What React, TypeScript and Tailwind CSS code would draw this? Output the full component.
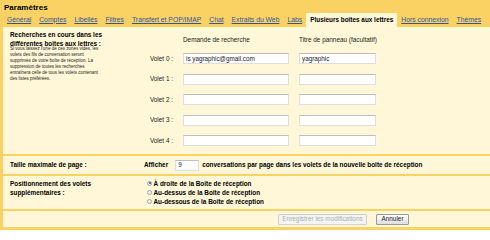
import React from 'react';

const tabs = [
  'Général',
  'Comptes',
  'Libellés',
  'Filtres',
  'Transfert et POP/IMAP',
  'Chat',
  'Extraits du Web',
  'Labs',
];

const volets = [
  { query: 'is yagraphic@gmail.com', title: 'yagraphic' },
  { query: '', title: '' },
  { query: '', title: '' },
  { query: '', title: '' },
  { query: '', title: '' },
];

const positions = [
  'À droite de la Boîte de réception',
  'Au-dessus de la Boîte de réception',
  'Au-dessous de la Boîte de réception',
];

const Field: React.FC<{ value: string; className: string }> = ({ value, className }) => (
  <div
    className={`h-[11px] bg-white border border-[#dedede] border-t-[#bdbdbd] flex items-center pl-[2px] text-[6.3px] text-[#222] whitespace-nowrap ${className}`}
  >
    {value}
  </div>
);

const Radio: React.FC<{ checked?: boolean }> = ({ checked }) => (
  <span className="w-[5px] h-[5px] rounded-full border border-[#a4a4a4] bg-[#f2f2f2] flex items-center justify-center shrink-0">
    {checked && <span className="w-[2px] h-[2px] rounded-full bg-[#2d4f9e]" />}
  </span>
);

const App: React.FC = () => {
  return (
    <div className="w-[490px] h-[230px] bg-[#fad163] pl-[3px] pb-[3px] flex flex-col font-['Liberation_Sans',Arial,sans-serif] text-black overflow-hidden">
      {/* Header */}
      <div className="h-[13px] shrink-0 flex items-center pl-[1px] pt-[2px] text-[8px] font-bold">Paramètres</div>

      {/* Tabs */}
      <div className="h-[14px] shrink-0 flex items-stretch pl-[4px] whitespace-nowrap">
        <div className="flex shrink-0 items-center gap-[8px] text-[6.8px] text-[#34559b] underline">
          {tabs.map((t) => (
            <span key={t} className="shrink-0">{t}</span>
          ))}
        </div>
        <div className="ml-[4px] shrink-0 bg-[#fff7d7] flex items-center px-[4px] text-[6.4px] font-bold">
          Plusieurs boîtes aux lettres
        </div>
        <div className="ml-[4px] shrink-0 flex items-center gap-[8px] text-[6.8px] text-[#34559b] underline">
          <span>Hors connexion</span>
          <span>Thèmes</span>
        </div>
      </div>

      {/* Content */}
      <div className="flex-1 bg-[#fff7d7] flex flex-col">
        {/* Volets */}
        <div className="h-[129px] flex border-b-2 border-[#fad163]">
          <div className="w-[141px] shrink-0 pl-[7px] pt-[3px]">
            <div className="text-[6.4px] font-bold leading-[9px] whitespace-nowrap">
              Recherches en cours dans les
              <br />
              différentes boîtes aux lettres :
            </div>
            <div className="mt-[-2px] text-[4.5px] leading-[6px] whitespace-nowrap text-[#222]">
              Si vous laissez l'une de ces zones vides, les
              <br />
              volets des fils de conversation seront
              <br />
              supprimés de votre boîte de réception. La
              <br />
              suppression de toutes les recherches
              <br />
              entraînera celle de tous les volets contenant
              <br />
              des listes préférées.
            </div>
          </div>
          <div className="pt-[8px] text-[6.4px] text-[#222] whitespace-nowrap">
            <div className="flex h-[10px] items-center">
              <span className="w-[39px]" />
              <span className="w-[116px]">Demande de recherche</span>
              <span>Titre de panneau (facultatif)</span>
            </div>
            <div className="mt-[8px] flex flex-col gap-[9.5px]">
              {volets.map((v, i) => (
                <div key={i} className="flex items-center h-[11px]">
                  <span className="w-[29px] text-right">Volet {i} :</span>
                  <Field value={v.query} className="ml-[10px] w-[106px]" />
                  <Field value={v.title} className="ml-[10px] w-[77px]" />
                </div>
              ))}
            </div>
          </div>
        </div>

        {/* Taille maximale */}
        <div className="h-[20px] flex items-center border-b-2 border-[#fad163] text-[6.4px] font-bold whitespace-nowrap">
          <div className="w-[141px] shrink-0 pl-[7px]">Taille maximale de page :</div>
          <div className="flex items-center">
            <span>Afficher</span>
            <Field value="9" className="ml-[7px] w-[24px] h-[10px] font-normal" />
            <span className="ml-[3px]">
              conversations par page dans les volets de la nouvelle boîte de réception
            </span>
          </div>
        </div>

        {/* Positionnement */}
        <div className="h-[35px] flex pt-[2.5px] border-b-2 border-[#fad163] text-[6.4px] font-bold leading-[9px] whitespace-nowrap">
          <div className="w-[141px] shrink-0 pl-[7px]">
            Positionnement des volets
            <br />
            supplémentaires :
          </div>
          <div className="flex flex-col pl-[3px]">
            {positions.map((p, i) => (
              <label key={p} className="flex items-center gap-[1.5px] h-[9px]">
                <Radio checked={i === 0} />
                <span>{p}</span>
              </label>
            ))}
          </div>
        </div>

        {/* Buttons */}
        <div className="flex-1 flex items-center pl-[275px] gap-[9px] text-[6.4px] whitespace-nowrap">
          <button
            disabled
            className="h-[11px] w-[89px] border border-[#d0d0d0] bg-[#f4f4f4] text-[#b0b0b0] rounded-[1px] flex items-center justify-center"
          >
            Enregistrer les modifications
          </button>
          <button className="h-[11px] w-[33px] border border-[#9a9a9a] bg-gradient-to-b from-[#ffffff] to-[#dedede] text-[#222] rounded-[1px] flex items-center justify-center">
            Annuler
          </button>
        </div>
      </div>
    </div>
  );
};

export default App;
